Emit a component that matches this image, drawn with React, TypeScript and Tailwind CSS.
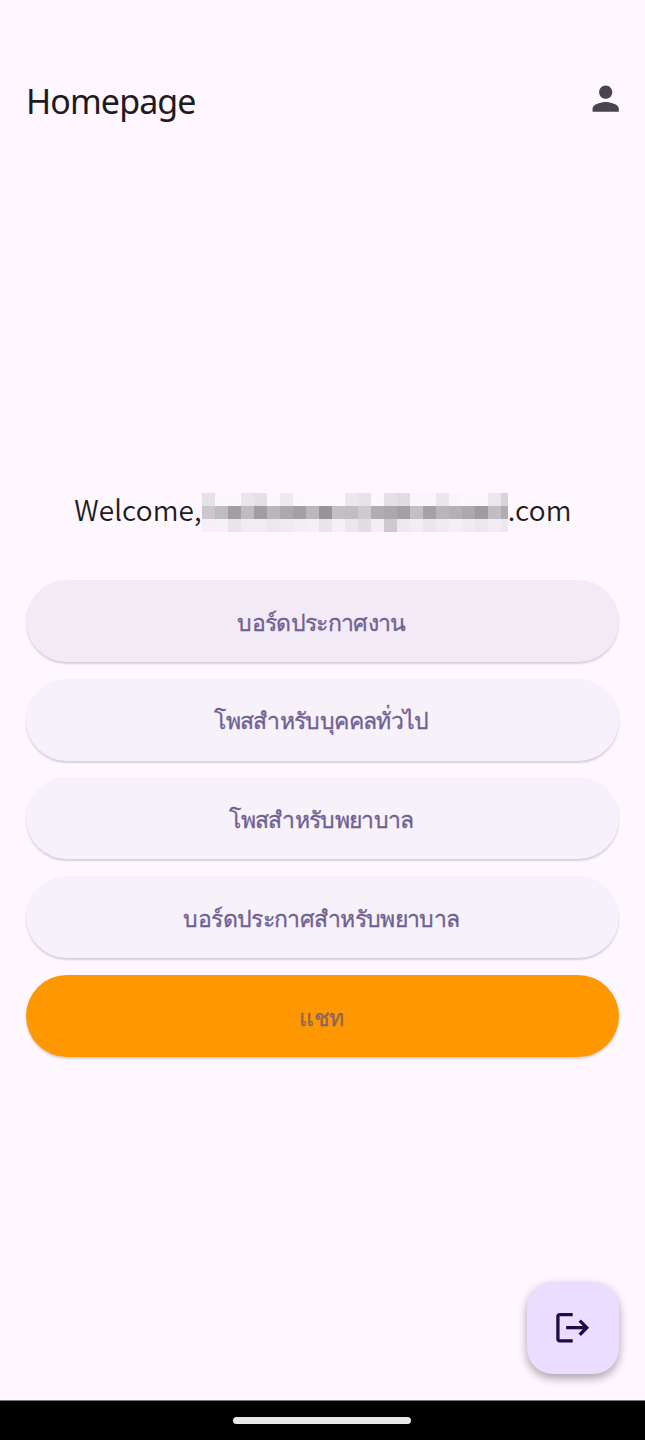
import React from "react";
import { MdLogout, MdPerson } from "react-icons/md";

const maskRows: string[][] = [
  ["#e5e1e6", "#fbf8fd", "#fbf8fd", "#ebe4ec", "#e4e0e5", "#fbf7fd", "#efe9f0", "#fdf6fd", "#fcf8fe", "#fcf8fe", "#fcf8fe", "#ece7ee", "#e6e2e7", "#fbf8fd", "#e4e0e5", "#e0dce2", "#f9f5fa", "#f9f5fa", "#ebe6ec", "#f9f5fc", "#fbf7fd", "#fbf7fd", "#ebe7ed", "#d7d3d9"],
  ["#cbc7cd", "#bfbbc1", "#a29da3", "#bfbbc1", "#a19ca2", "#bbb6bd", "#aca8ae", "#a39fa4", "#bbb7bd", "#989399", "#c3bfc5", "#c1bdc3", "#cecbd0", "#b0acb2", "#aca8ae", "#a39fa4", "#c3bfc5", "#a5a1a7", "#b9b5bb", "#b4b0b6", "#aca8ae", "#9f9ba1", "#c1bdc3", "#b0acb2"],
  ["#f4f0f5", "#f5f1f7", "#e8e4e9", "#f0ecf1", "#f0ecf1", "#ebe7ec", "#f0ebf1", "#f2eef3", "#f5f0f6", "#e9e5ea", "#f4f0f5", "#ebe6ec", "#e2dce3", "#f2eef3", "#ccc8ce", "#eee9ef", "#f2ecf3", "#ebe6ec", "#efebf0", "#f3eff4", "#efebf1", "#ebe7ec", "#f0ecf1", "#ece8ed"],
];

function MaskedName() {
  return (
    <svg width="306" height="39" viewBox="0 0 306 39" shapeRendering="crispEdges" className="shrink-0" aria-hidden="true">
      {maskRows.map((row, y) =>
        row.map((fill, x) => <rect key={`${x}-${y}`} x={x * 13} y={y * 13} width="13" height="13" fill={fill} />)
      )}
    </svg>
  );
}

const actions = [
  { label: "บอร์ดประกาศงาน", style: "bg-[#f2ebf6] text-[#6f6093]" },
  { label: "โพสสำหรับบุคคลทั่วไป", style: "bg-[#f7f1f9] text-[#6f6093]" },
  { label: "โพสสำหรับพยาบาล", style: "bg-[#f7f1f9] text-[#6f6093]" },
  { label: "บอร์ดประกาศสำหรับพยาบาล", style: "bg-[#f7f1f9] text-[#6f6093]" },
  { label: "แชท", style: "bg-[#ff9800] text-[#8d655f]" },
];

export default function App() {
  return (
    <div className="flex h-[1440px] w-[645px] flex-col bg-[#fef7ff] font-['Noto_Sans_CJK_JP',sans-serif] text-[#1d1b20]">
      <header className="flex h-[145px] items-center justify-between pt-[57px] pr-[20px] pl-[26px]">
        <h1 className="font-['Noto_Sans',sans-serif] text-[34px] leading-[48px] tracking-[-0.9px]">Homepage</h1>
        <button aria-label="Profile" className="-mt-[5px] text-[#49454f]">
          <MdPerson className="size-[39.4px]" />
        </button>
      </header>

      <main className="flex grow flex-col px-[26px] pt-[348px]">
        <p className="flex h-[39px] items-center justify-center pl-px text-[28px] leading-[39px] font-[350]">
          <span className="-mt-[6px] tracking-[0.1px]">Welcome,</span>
          <MaskedName />
          <span className="-mt-[6px] tracking-[0.2px]">.com</span>
        </p>
        <div className="mt-[48px] flex flex-col gap-[16.7px]">
          {actions.map(({ label, style }) => (
            <button
              key={label}
              className={`flex h-[82px] shrink-0 items-center justify-center rounded-full pr-[2px] text-[23px] tracking-[-0.65px] shadow-[0_2px_2px_rgba(0,0,0,0.16)] [-webkit-text-stroke:0.3px] ${style}`}
            >
              {label}
            </button>
          ))}
        </div>
        <button
          aria-label="Log out"
          className="mt-auto mb-[26px] flex size-[92px] items-center justify-center self-end rounded-[26px] bg-[#eaddff] text-[#1f0a45] shadow-[0_5px_8px_rgba(0,0,0,0.25),0_2px_12px_rgba(0,0,0,0.1)]"
        >
          <MdLogout className="size-[39.4px]" />
        </button>
      </main>

      <nav className="flex h-[40px] items-center justify-center border-t border-[#777379] bg-black pr-px">
        <div className="h-[7px] w-[178px] rounded-full bg-[#e8e8e8]" />
      </nav>
    </div>
  );
}
